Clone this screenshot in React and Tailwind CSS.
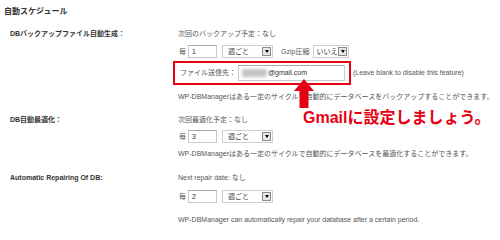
import React from 'react';

function TextBox({ value, className = '' }) {
  return (
    <div
      className={`flex items-center border border-[#c9c9c9] border-t-[#a9a9a9] bg-white pl-[3px] text-[#333] ${className}`}
    >
      {value}
    </div>
  );
}

function Select({ label, className = '' }) {
  return (
    <div
      className={`flex h-[13px] items-center justify-between border border-[#cfcfcf] bg-white pr-[1px] text-[#333] ${className}`}
    >
      <span>{label}</span>
      <span className="flex h-[9px] w-[9px] shrink-0 items-center justify-center border border-[#8a8a8a] bg-[#e6e6e6]">
        <span className="h-0 w-0 border-x-[2px] border-t-[3px] border-x-transparent border-t-black" />
      </span>
    </div>
  );
}

function Row({ label, children, className = '' }) {
  return (
    <div className={`flex ${className}`}>
      <div className="w-[178px] shrink-0 pl-[10px] font-bold leading-[14px] text-[#333]">{label}</div>
      <div className="flex-1 leading-[14px] text-[#555]">{children}</div>
    </div>
  );
}

function EveryLine({ n, children }) {
  return (
    <div className="flex h-[13px] items-center">
      <span className="ml-[1px] w-[9px]">毎</span>
      <TextBox value={n} className="h-[13px] w-[29px]" />
      <Select label="週ごと" className="ml-[5px] w-[51px] pl-[5px]" />
      {children}
    </div>
  );
}

export default function App() {
  return (
    <div className="relative h-[240px] w-[500px] overflow-hidden whitespace-nowrap bg-white font-['Liberation_Sans','Noto_Sans_CJK_JP',sans-serif] text-[7px]">
      <div className="h-[24px] pl-[4px] text-[8px] font-bold leading-[24px] text-[#333]">自動スケジュール</div>

      <Row label="DBバックアップファイル自動生成：" className="mt-[3px]">
        <div>次回のバックアップ予定：なし</div>
        <div className="mt-[4px]">
          <EveryLine n="1">
            <span className="ml-[8px]">Gzip圧縮</span>
            <Select label="いいえ" className="ml-[4px] w-[36px] pl-[2px]" />
          </EveryLine>
        </div>
        <div className="mt-[3px] flex items-center">
          <div className="-ml-[5px] flex h-[24px] w-[178px] items-center border-2 border-[#e60012] pl-[5px]">
            <span>ファイル送信先：</span>
            <TextBox
              className="ml-[2px] h-[16px] w-[107px]"
              value={
                <>
                  <span className="h-[8px] w-[25px] rounded-[2px] bg-[#c4c4c4] blur-[1.5px]" />
                  <span className="ml-[1px]">@gmail.com</span>
                </>
              }
            />
          </div>
          <span className="ml-[2px]">(Leave blank to disable this feature)</span>
        </div>
        <div className="mt-[5px]">
          WP-DBManagerはある一定のサイクルで自動的にデータベースをバックアップすることができます。
        </div>
      </Row>

      <Row label="DB自動最適化：" className="mt-[9px]">
        <div>次回最適化予定：なし</div>
        <div className="mt-[3px]">
          <EveryLine n="3" />
        </div>
        <div className="mt-[4px]">
          WP-DBManagerはある一定のサイクルで自動的にデータベースを最適化することができます。
        </div>
      </Row>

      <Row label="Automatic Repairing Of DB:" className="mt-[10px]">
        <div>Next repair date: なし</div>
        <div className="mt-[5px]">
          <EveryLine n="2" />
        </div>
        <div className="mt-[10px]">
          WP-DBManager can automatically repair your database after a certain period.
        </div>
      </Row>

      <svg className="absolute left-[293px] top-[79px]" width="22" height="29" viewBox="0 0 22 29">
        <path d="M11 0 L21 12 L15.5 12 L15.5 29 L6.5 29 L6.5 12 L1 12 Z" fill="#e60012" />
      </svg>
      <div className="absolute left-[303px] top-[108px] text-[16px] font-bold leading-[20px] text-[#e60012]">
        Gmailに設定しましょう。
      </div>
    </div>
  );
}
